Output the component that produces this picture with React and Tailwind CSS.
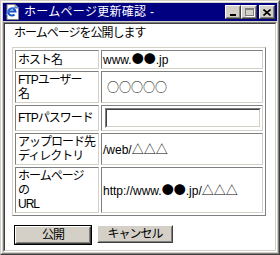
const J = ({ children }) => (
  <span className="font-['Noto_Sans_CJK_JP',sans-serif]">{children}</span>
);

export default function App() {
  const rows = [
    { label: "ホスト名", value: <>www.<J>●●</J>.jp</> },
    { label: <>FTPユーザー<br />名</>, value: <span className="pl-[4px]"><J>○○○○○</J></span> },
    { label: "FTPパスワード", input: true },
    { label: <>アップロード先<br />ディレクトリ</>, value: <>/web/<J>△△△</J></> },
    { label: <>ホームページ<br />の<br />URL</>, value: <>http://www.<J>●●</J>.jp/<J>△△△</J></> },
  ];

  return (
    <div className="w-[280px] h-[255px] bg-[#d4d0c8] border border-t-[#d4d0c8] border-l-[#d4d0c8] border-r-[#404040] border-b-[#404040] font-['Liberation_Sans','Noto_Sans_CJK_JP',sans-serif] text-[12px] text-black">
      <div className="h-full flex flex-col p-[1px] border border-t-white border-l-white border-r-[#808080] border-b-[#808080]">
        {/* title bar */}
        <div className="h-[18px] shrink-0 bg-[#000080] flex items-center pl-[2px] pr-[2px]">
          <svg width="16" height="16" viewBox="0 0 16 16" className="shrink-0">
            <path d="M2 0.5h8l3.5 3.5v11.5h-11.5z" fill="#fff" stroke="#808080" />
            <path d="M10 0.5v3.5h3.5" fill="#d4d0c8" stroke="#808080" />
            <path d="M3 7.5h7.5a3.6 3.6 0 1 0 -1 3" fill="none" stroke="#1450c8" strokeWidth="2" />
            <path d="M1 11c3-6 9-9 13-7" fill="none" stroke="#3c8ce6" strokeWidth="1" />
          </svg>
          <span className="ml-[3px] text-white tracking-[0.3px] whitespace-nowrap">ホームページ更新確認 -</span>
          <div className="ml-auto flex items-center">
            <TitleBtn>
              <div className="w-[6px] h-[2px] bg-black mt-[6px]" />
            </TitleBtn>
            <TitleBtn>
              <div className="w-[9px] h-[8px] border border-[#808080] border-t-2 shadow-[1px_1px_0_#fff]" />
            </TitleBtn>
            <div className="w-[2px]" />
            <TitleBtn>
              <svg width="8" height="7" viewBox="0 0 8 7">
                <path d="M0.5 0.5l7 6M7.5 0.5l-7 6" stroke="#000" strokeWidth="1.6" />
              </svg>
            </TitleBtn>
          </div>
        </div>

        {/* client */}
        <div className="mt-[1px] flex-1 border border-t-[#808080] border-l-[#808080] border-r-white border-b-white">
          <div className="h-full bg-white border border-t-[#404040] border-l-[#404040] border-r-[#d4d0c8] border-b-[#d4d0c8] pl-[7px] pt-[2px]">
            <p className="ml-[2px] leading-[14px] tracking-[-1px]">ホームページを公開します</p>

            <table className="mt-[7px] w-[254px] border-separate border-spacing-[2px] border border-t-[#d4d0c8] border-l-[#d4d0c8] border-r-[#808080] border-b-[#808080]">
              <tbody>
                {rows.map((r, i) => (
                  <tr key={i}>
                    <td className="w-[86px] p-[1px] pl-[2px] leading-[14px] tracking-[-1px] whitespace-nowrap align-middle border border-t-[#808080] border-l-[#808080] border-r-[#d4d0c8] border-b-[#d4d0c8]">
                      {r.label}
                    </td>
                    <td className="p-[1px] leading-[14px] whitespace-nowrap align-middle border border-t-[#808080] border-l-[#808080] border-r-[#d4d0c8] border-b-[#d4d0c8]">
                      {r.input ? (
                        <div className="my-[1px] ml-[2px] w-[156px] h-[20px] border border-t-[#808080] border-l-[#808080] border-r-white border-b-white">
                          <div className="h-full border border-t-[#404040] border-l-[#404040] border-r-[#d4d0c8] border-b-[#d4d0c8] bg-white" />
                        </div>
                      ) : (
                        r.value
                      )}
                    </td>
                  </tr>
                ))}
              </tbody>
            </table>

            <div className="mt-[9px] flex gap-[5px] ml-[2px]">
              <div className="border border-black">
                <Btn w="w-[76px]">公開</Btn>
              </div>
              <Btn w="w-[76px]">キャンセル</Btn>
            </div>
          </div>
        </div>
      </div>
    </div>
  );
}

function TitleBtn({ children }) {
  return (
    <div className="w-[16px] h-[14px] border border-t-white border-l-white border-r-[#404040] border-b-[#404040]">
      <div className="h-full flex items-center justify-center bg-[#d4d0c8] border border-t-[#d4d0c8] border-l-[#d4d0c8] border-r-[#808080] border-b-[#808080]">
        {children}
      </div>
    </div>
  );
}

function Btn({ w, children }) {
  return (
    <div className={`${w} h-[18px] border border-t-white border-l-white border-r-[#404040] border-b-[#404040]`}>
      <div className="h-full flex items-center justify-center bg-[#d4d0c8] border border-t-[#d4d0c8] border-l-[#d4d0c8] border-r-[#808080] border-b-[#808080] tracking-[-1px] leading-none">
        {children}
      </div>
    </div>
  );
}
